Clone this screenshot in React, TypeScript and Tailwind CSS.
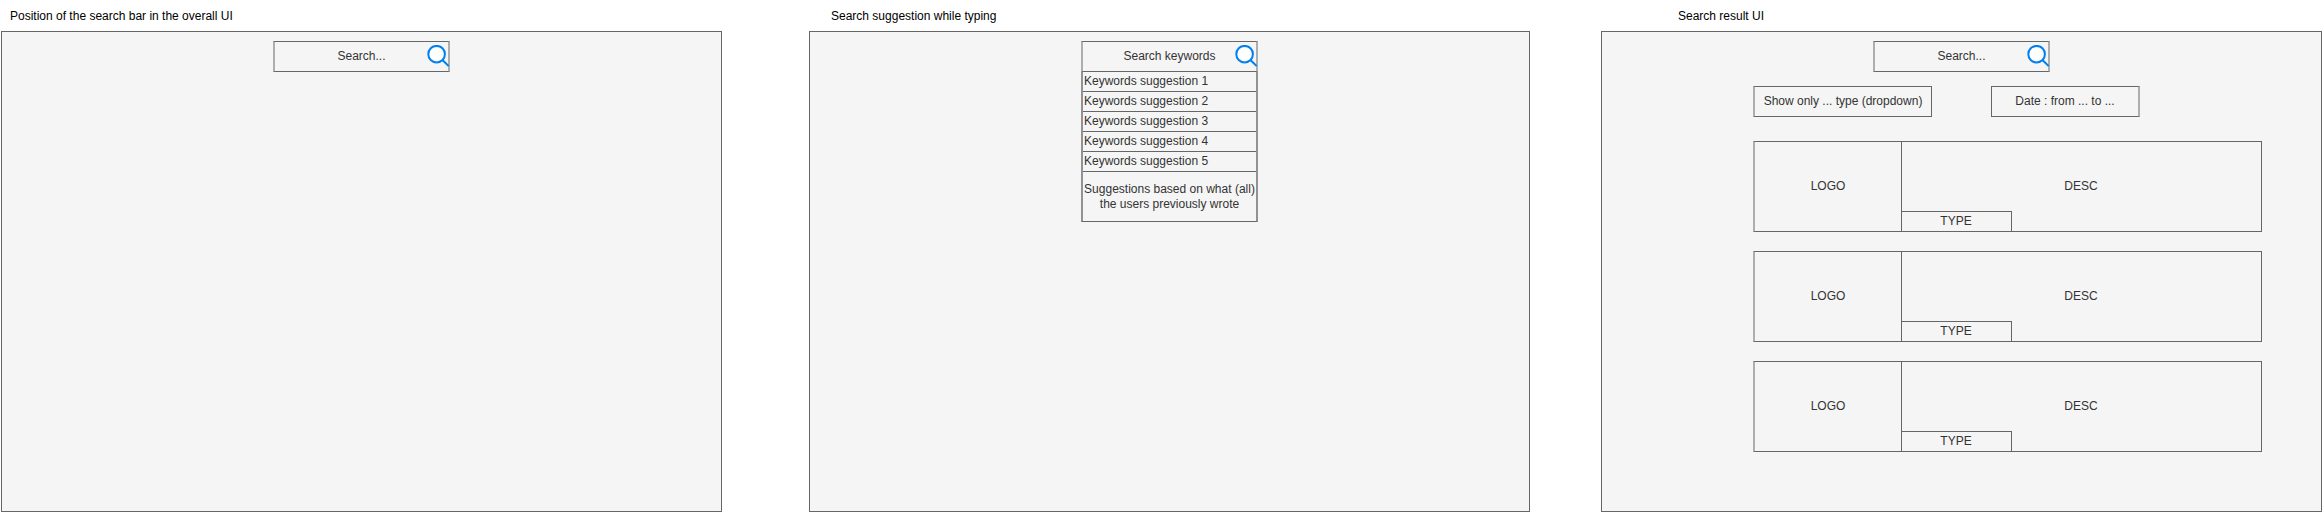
import type { ReactNode } from "react";

function SearchIcon({ className }: { className: string }) {
  return (
    <svg className={className} width="22" height="22" viewBox="0 0 22 22" fill="none" stroke="#0080f0" strokeWidth="2">
      <circle cx="9.6" cy="9.2" r="8.3" fill="#fff" />
      <path d="M15.4 15 L21.7 21" />
    </svg>
  );
}

function SearchBar({ children }: { children: ReactNode }) {
  return (
    <div className="relative flex h-[31px] w-[177px] items-center justify-center border-x-2 border-y border-x-[#aeaeae] border-y-[#666] pb-px">
      <span>{children}</span>
      <SearchIcon className="absolute top-[3px] -right-[1px]" />
    </div>
  );
}

function Panel({ title, titleClass, children }: { title: string; titleClass: string; children: ReactNode }) {
  return (
    <section className="w-[721px] shrink-0">
      <h2 className={`h-[31px] pt-[9px] leading-[14px] text-black ${titleClass}`}>{title}</h2>
      <div className="h-[481px] border border-[#666] bg-[#f5f5f5] pt-[9px]">{children}</div>
    </section>
  );
}

function ResultCard() {
  return (
    <article className="flex h-[91px] w-[509px] border border-l-2 border-[#666] border-l-[#aeaeae]">
      <div className="flex w-[147px] shrink-0 items-center justify-center border-r border-[#666] pb-px">LOGO</div>
      <div className="relative flex grow items-center justify-center pr-px pb-px">
        DESC
        <div className="absolute bottom-0 left-0 flex h-5 w-[110px] items-center justify-center border-t border-r border-[#666] pr-px pb-px">
          TYPE
        </div>
      </div>
    </article>
  );
}

export default function App() {
  return (
    <main className="flex h-[514px] w-[2324px] gap-[79px] overflow-hidden bg-white pl-px font-['Liberation_Sans',Arial,sans-serif] text-[12px] leading-[14px] text-[#333]">
      <div className="mr-2">
        <Panel title="Position of the search bar in the overall UI" titleClass="pl-[9px]">
          <div className="pl-[271px]">
            <SearchBar>Search...</SearchBar>
          </div>
        </Panel>
      </div>
      <div className="-mr-[8px]">
        <Panel title="Search suggestion while typing" titleClass="pl-[22px]">
          <div className="ml-[271px] w-[177px]">
            <SearchBar>Search keywords</SearchBar>
            <ul className="border-x-2 border-x-[#929292]">
              {[1, 2, 3, 4, 5].map((n) => (
                <li key={n} className="h-5 border-b border-[#666] pt-[2px] pl-px">
                  Keywords suggestion {n}
                </li>
              ))}
            </ul>
            <p className="flex h-[50px] items-center justify-center border-x-2 border-b border-x-[#929292] border-b-[#666] text-center leading-[15px] whitespace-nowrap">
              Suggestions based on what (all)
              <br />
              the users previously wrote
            </p>
          </div>
        </Panel>
      </div>
      <Panel title="Search result UI" titleClass="pl-[77px]">
        <div className="pl-[271px]">
          <SearchBar>Search...</SearchBar>
        </div>
        <div className="mt-[14px] ml-[151px] flex gap-[59px]">
          <div className="flex h-[31px] w-[179px] items-center justify-center border border-l-2 border-[#666] border-l-[#aeaeae] pb-px">
            Show only ... type (dropdown)
          </div>
          <div className="flex h-[31px] w-[149px] items-center justify-center border border-r-2 border-[#666] border-r-[#aeaeae] pb-px">
            Date : from ... to ...
          </div>
        </div>
        <div className="mt-6 ml-[151px] flex flex-col gap-[19px]">
          <ResultCard />
          <ResultCard />
          <ResultCard />
        </div>
      </Panel>
    </main>
  );
}
